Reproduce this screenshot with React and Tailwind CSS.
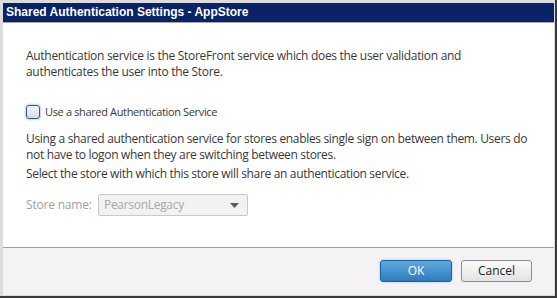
export default function App() {
  const body = { fontFamily: '"Open Sans", "Liberation Sans", sans-serif' };

  return (
    <div className="w-[557px] h-[298px] bg-[#dcdcdc] border-r-2 border-b-2 border-[#3a3a3a] pl-[3px] pt-[3px] pr-px pb-px">
      <div className="flex flex-col h-full bg-white">
        <div
          className="h-[19px] bg-[#0a2366] text-white font-bold text-[12px] leading-[19px] pl-[3px]"
          style={{ fontFamily: '"Liberation Sans", Arial, sans-serif' }}
        >
          Shared Authentication Settings - AppStore
        </div>
        <div className="h-px bg-[#a8a8a8]" />

        <div className="h-[224px] pl-[23px] pt-[25px] text-[12px] text-[#383838]" style={body}>
          <p className="leading-[16px] tracking-[-0.3px]">
            Authentication service is the StoreFront service which does the user validation and
            <br />
            authenticates the user into the Store.
          </p>

          <label className="mt-[24px] flex items-center gap-[5px] h-[16px] text-[11px] tracking-[-0.35px]">
            <span className="w-[14px] h-[14px] rounded-[3px] border border-[#3c5a7a] bg-gradient-to-b from-[#f4f4f4] to-[#d6dce4] shadow-[0_0_2px_1px_#b8d4ee]" />
            Use a shared Authentication Service
          </label>

          <p className="mt-[11px] leading-[16px] tracking-[-0.33px]">
            Using a shared authentication service for stores enables single sign on between them. Users do
            <br />
            not have to logon when they are switching between stores.
          </p>
          <p className="mt-[3px] leading-[16px] tracking-[-0.33px]">
            Select the store with which this store will share an authentication service.
          </p>

          <div className="mt-[12px] flex items-center h-[22px]">
            <span className="w-[72px] text-[#a0a0a0] tracking-[-0.2px]">Store name:</span>
            <div className="w-[150px] h-[22px] flex items-center justify-between pl-[5px] pr-[8px] border border-[#c8c8c8] rounded-[2px] bg-[#f2f2f2] text-[#a8a8a8] tracking-[-0.3px]">
              <span>PearsonLegacy</span>
              <svg width="9" height="5" viewBox="0 0 9 5">
                <path d="M0 0 L9 0 L4.5 5 Z" fill="#5a5a5a" />
              </svg>
            </div>
          </div>
        </div>

        <div className="h-px bg-[#a0a0a0]" />

        <div className="flex-1 bg-[#f5f2f5] flex justify-end items-start pt-[12px] pr-[22px] gap-[9px] text-[12px]" style={body}>
          <button className="w-[72px] h-[22px] rounded-[3px] border border-[#1f5f97] bg-gradient-to-b from-[#5fa9dc] to-[#2d7cbf] text-white shadow-[0_0_3px_#a9cdea]">
            OK
          </button>
          <button className="w-[71px] h-[22px] rounded-[3px] border border-[#8c8c8c] bg-gradient-to-b from-[#fbfbfb] to-[#e3e3e3] text-[#222]">
            Cancel
          </button>
        </div>
      </div>
    </div>
  );
}
